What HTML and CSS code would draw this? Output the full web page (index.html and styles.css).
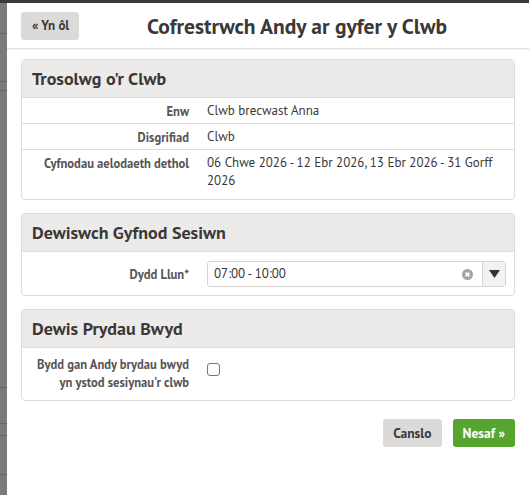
FILE: index.html
```html
<!DOCTYPE html>
<html>
<head>
<meta charset="utf-8">
<link rel="stylesheet" href="styles.css">
</head>
<body>
<div class="page">
  <div class="backdrop">
    <div class="bd-line l1"></div>
    <div class="bd-line l2"></div>
    <div class="bd-line l3"></div>
    <div class="bd-line l4"></div>
    <div class="bd-line l5"></div>
    <div class="bd-line l6"></div>
    <div class="bd-line l7"></div>
  </div>
  <div class="modal">
    <div class="header">
      <button class="btn btn-back">« Yn ôl</button>
      <h1 class="title">Cofrestrwch Andy ar gyfer y Clwb</h1>
    </div>
    <div class="body">
      <div class="panel">
        <div class="panel-head">Trosolwg o'r Clwb</div>
        <div class="row">
          <div class="label">Enw</div>
          <div class="value">Clwb brecwast Anna</div>
        </div>
        <div class="row">
          <div class="label">Disgrifiad</div>
          <div class="value">Clwb</div>
        </div>
        <div class="row">
          <div class="label">Cyfnodau aelodaeth dethol</div>
          <div class="value">06 Chwe 2026 - 12 Ebr 2026, 13 Ebr 2026 - 31 Gorff 2026</div>
        </div>
      </div>

      <div class="panel">
        <div class="panel-head">Dewiswch Gyfnod Sesiwn</div>
        <div class="row form-row">
          <div class="label">Dydd Llun*</div>
          <div class="select">
            <span class="select-text">07:00 - 10:00</span>
            <span class="clear">
              <svg width="11" height="11" viewBox="0 0 11 11"><circle cx="5.5" cy="5.5" r="5.5" fill="#a3a3a3"/><path d="M3.6 3.6 L7.4 7.4 M7.4 3.6 L3.6 7.4" stroke="#fff" stroke-width="1.6"/></svg>
            </span>
            <span class="arrow">
              <svg width="11" height="8" viewBox="0 0 11 8"><path d="M0 0 H11 L5.5 8 Z" fill="#333"/></svg>
            </span>
          </div>
        </div>
      </div>

      <div class="panel">
        <div class="panel-head">Dewis Prydau Bwyd</div>
        <div class="row check-row">
          <div class="label">Bydd gan Andy brydau bwyd yn ystod sesiynau'r clwb</div>
          <div class="check-wrap"><span class="checkbox"></span></div>
        </div>
      </div>

      <div class="actions">
        <button class="btn btn-cancel">Canslo</button>
        <button class="btn btn-next">Nesaf »</button>
      </div>
    </div>
  </div>
</div>
</body>
</html>
```
FILE: styles.css
```css
* { box-sizing: border-box; }
html, body { margin: 0; padding: 0; }
body {
  font-family: "PT Sans", Lato, "Noto Sans", sans-serif;
  color: #3b3838;
  background: #3b3838;
  width: 529px;
  height: 495px;
  overflow: hidden;
}
.page {
  display: flex;
  padding-top: 3px;
  height: 495px;
}
.backdrop {
  width: 7px;
  background: #7e7a78;
  position: relative;
  flex-shrink: 0;
}
.bd-line {
  position: absolute;
  left: 0;
  width: 7px;
  height: 1px;
  background: #6a6664;
}
.l1 { top: 30px; }
.l2 { top: 78px; }
.l3 { top: 87px; }
.l4 { top: 384px; }
.l5 { top: 420px; }
.l6 { top: 432px; }
.l7 { top: 471px; }
.modal {
  flex: 1;
  background: #fff;
  display: flex;
  flex-direction: column;
}
.header {
  height: 46px;
  display: flex;
  align-items: center;
  padding: 0 14px;
  border-bottom: 1px solid #e2e1e0;
  box-shadow: 0 1px 2px rgba(0,0,0,0.06);
}
.btn {
  font-family: inherit;
  border: none;
  border-radius: 3px;
  font-weight: 700;
  cursor: pointer;
}
.btn-back {
  background: #dcdad9;
  color: #3b3838;
  font-size: 13px;
  height: 28px;
  padding: 0 10px 0 11px;
}
.title {
  flex: 1;
  margin: 0;
  text-align: center;
  font-size: 21.5px;
  font-weight: 700;
  color: #3b3838;
}
.body {
  padding: 10px 14px 0 14px;
  display: flex;
  flex-direction: column;
  gap: 13px;
}
.panel {
  border: 1px solid #dcdbda;
  border-radius: 4px;
  overflow: hidden;
}
.panel-head {
  background: #ecebea;
  height: 38px;
  line-height: 37px;
  padding: 0 10px;
  font-size: 18px;
  font-weight: 700;
  color: #3b3838;
  border-bottom: 1px solid #dcdbda;
}
.row {
  display: flex;
  line-height: 18px;
  padding: 4px 0 3px;
  border-bottom: 1px solid #dcdbda;
}
.row:last-child { border-bottom: none; padding-bottom: 9px; }
.label {
  width: 167px;
  padding-left: 12px;
  text-align: right;
  font-weight: 700;
  font-size: 12.6px;
  color: #555;
  flex-shrink: 0;
}
.value {
  padding-left: 18px;
  padding-right: 12px;
  font-size: 13px;
  color: #3b3838;
}
.row.form-row {
  padding: 9px 0 8px;
  align-items: center;
}
.select {
  margin-left: 18px;
  width: 299px;
  height: 26px;
  border: 1px solid #d6d5d4;
  border-radius: 3px;
  display: flex;
  align-items: center;
  font-size: 13px;
  color: #333;
}
.select-text {
  flex: 1;
  padding-left: 6px;
}
.clear {
  display: flex;
  padding-right: 9px;
}
.arrow {
  width: 23px;
  height: 24px;
  border-left: 1px solid #d6d5d4;
  background: #f3f2f1;
  display: flex;
  align-items: center;
  justify-content: center;
}
.row.check-row {
  align-items: flex-start;
  padding: 7px 0 9px;
}
.check-wrap {
  padding-left: 18px;
  padding-top: 8px;
}
.checkbox {
  display: block;
  width: 13px;
  height: 13px;
  border: 1px solid #767676;
  border-radius: 3px;
  background: #fff;
}
.actions {
  display: flex;
  justify-content: flex-end;
  gap: 11px;
  padding-top: 5px;
}
.btn-cancel, .btn-next {
  height: 28px;
  font-size: 13.5px;
  padding: 0 10px;
}
.btn-cancel {
  background: #dcdad9;
  color: #3b3838;
}
.btn-next {
  background: #56a52f;
  color: #fff;
}
```
